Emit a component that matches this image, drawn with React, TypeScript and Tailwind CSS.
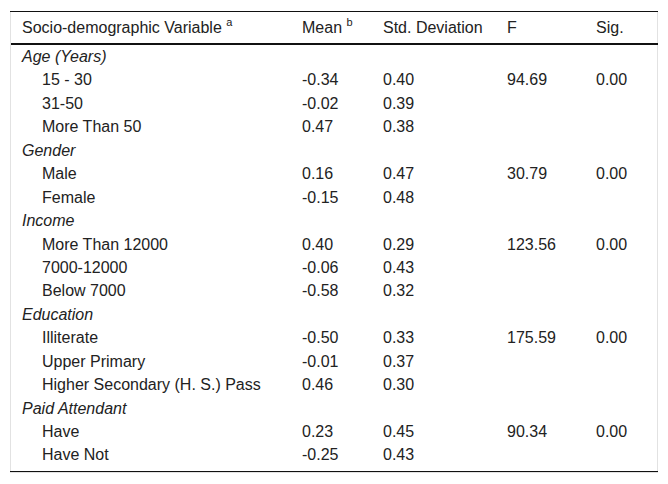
import React from "react";

type Row = { label: string; group?: boolean; mean?: string; sd?: string; f?: string; sig?: string };

const rows: Row[] = [
  { label: "Age (Years)", group: true },
  { label: "15 - 30", mean: "-0.34", sd: "0.40", f: "94.69", sig: "0.00" },
  { label: "31-50", mean: "-0.02", sd: "0.39" },
  { label: "More Than 50", mean: "0.47", sd: "0.38" },
  { label: "Gender", group: true },
  { label: "Male", mean: "0.16", sd: "0.47", f: "30.79", sig: "0.00" },
  { label: "Female", mean: "-0.15", sd: "0.48" },
  { label: "Income", group: true },
  { label: "More Than 12000", mean: "0.40", sd: "0.29", f: "123.56", sig: "0.00" },
  { label: "7000-12000", mean: "-0.06", sd: "0.43" },
  { label: "Below 7000", mean: "-0.58", sd: "0.32" },
  { label: "Education", group: true },
  { label: "Illiterate", mean: "-0.50", sd: "0.33", f: "175.59", sig: "0.00" },
  { label: "Upper Primary", mean: "-0.01", sd: "0.37" },
  { label: "Higher Secondary (H. S.) Pass", mean: "0.46", sd: "0.30" },
  { label: "Paid Attendant", group: true },
  { label: "Have", mean: "0.23", sd: "0.45", f: "90.34", sig: "0.00" },
  { label: "Have Not", mean: "-0.25", sd: "0.43" },
];

export default function App() {
  return (
    <div
      className="w-[668px] h-[484px] bg-white text-[16px] text-[#222] pt-[11px] pl-[10px]"
      style={{ fontFamily: '"Liberation Sans", Arial, sans-serif' }}
    >
      <div className="w-[648px] border-l border-r border-b border-[#e2e2e2]">
        <div className="border-t border-b border-[#111] ml-[-1px] mr-[-1px] pb-[4px]">
          <div className="grid grid-cols-[280px_81px_124px_89px_1fr] h-[33px] items-center border-b-2 border-[#111] leading-[23.45px] ml-[1px]">
            <div className="pl-[11px] whitespace-nowrap">
              Socio-demographic Variable <sup className="text-[11px] top-[-0.6em]">a</sup>
            </div>
            <div className="pl-[11px] whitespace-nowrap">
              Mean <sup className="text-[11px] top-[-0.6em]">b</sup>
            </div>
            <div className="pl-[11px] whitespace-nowrap">Std. Deviation</div>
            <div className="pl-[11px]">F</div>
            <div className="pl-[11px]">Sig.</div>
          </div>
          <div className="ml-[1px]">
            {rows.map((r, i) => (
              <div
                key={i}
                className="grid grid-cols-[280px_81px_124px_89px_1fr] h-[23.45px] leading-[23.45px] whitespace-nowrap"
              >
                {r.group ? (
                  <div className="pl-[11px] italic">{r.label}</div>
                ) : (
                  <div className="pl-[31px]">{r.label}</div>
                )}
                <div className="pl-[11px]">{r.mean ?? ""}</div>
                <div className="pl-[11px]">{r.sd ?? ""}</div>
                <div className="pl-[11px]">{r.f ?? ""}</div>
                <div className="pl-[11px]">{r.sig ?? ""}</div>
              </div>
            ))}
          </div>
        </div>
      </div>
    </div>
  );
}
